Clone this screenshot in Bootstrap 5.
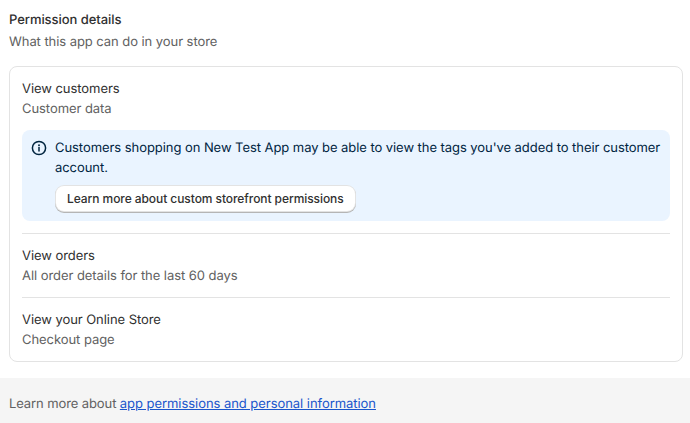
<!DOCTYPE html>
<html lang="en"><head><meta charset="utf-8">
<link href="https://cdn.jsdelivr.net/npm/bootstrap@5.3.0/dist/css/bootstrap.min.css" rel="stylesheet">
<style>
html,body{height:423px;overflow:hidden}
body{font-family:Inter,sans-serif;font-size:13px;line-height:20px;letter-spacing:-.06px;color:#303030;background:#fff;text-rendering:geometricPrecision}
.perm-wrap{padding:10px 7px 0 9px;height:378px}
.perm-title{font-weight:550;color:#303030}
.perm-sub{color:#616161;margin-top:2px;margin-bottom:14px}
.perm-box{border:1px solid #e3e3e3;border-radius:8px;padding:12px 12px 11px}
.perm-name{color:#303030}
.perm-desc{color:#616161}
.perm-banner{background:#eaf4ff;border-radius:8px;padding:8px 8px 8px 9px;margin-top:11px;margin-bottom:12px;color:#00243f;height:91px}
.perm-icon{margin-top:2px}
.perm-btn{display:block;background:#fff;border:0;border-radius:8px;font-size:12px;font-weight:550;letter-spacing:-.07px;line-height:16px;padding:5px 11px;color:#303030;box-shadow:0 0 0 1px #e3e3e3,0 1px 0 1px #b5b5b5;margin:8px 0 0 1px;height:25px}
.perm-rule{border:0;border-top:1px solid #e3e3e3;margin:11px 0 12px;opacity:1}
.perm-foot{background:#f5f5f5;height:45px;padding:16px 9px 0}
.perm-foot span{color:#616161;letter-spacing:-.1px}
.perm-foot a{color:#1a56cc;letter-spacing:-.05px}
</style></head><body>
<div class="perm-wrap">
<div class="perm-title">Permission details</div>
<div class="perm-sub">What this app can do in your store</div>
<div class="perm-box">
<div class="perm-name">View customers</div>
<div class="perm-desc">Customer data</div>
<div class="perm-banner d-flex gap-2">
<svg class="flex-shrink-0 perm-icon" width="16" height="16" viewBox="0 0 16 16" fill="none"><circle cx="8" cy="8" r="6.6" stroke="#00243f" stroke-width="1.5"/><path d="M8 7.5v3.5" stroke="#00243f" stroke-width="1.5" stroke-linecap="round"/><circle cx="8" cy="5.2" r=".95" fill="#00243f"/></svg>
<div>Customers shopping on New Test App may be able to view the tags you've added to their customer account.<button class="perm-btn" type="button">Learn more about custom storefront permissions</button></div>
</div>
<hr class="perm-rule">
<div class="perm-name">View orders</div>
<div class="perm-desc">All order details for the last 60 days</div>
<hr class="perm-rule">
<div class="perm-name">View your Online Store</div>
<div class="perm-desc">Checkout page</div>
</div>
</div>
<div class="perm-foot"><span>Learn more about </span><a href="#">app permissions and personal information</a></div>
<script src="https://cdn.jsdelivr.net/npm/bootstrap@5.3.0/dist/js/bootstrap.bundle.min.js"></script>
</body></html>
